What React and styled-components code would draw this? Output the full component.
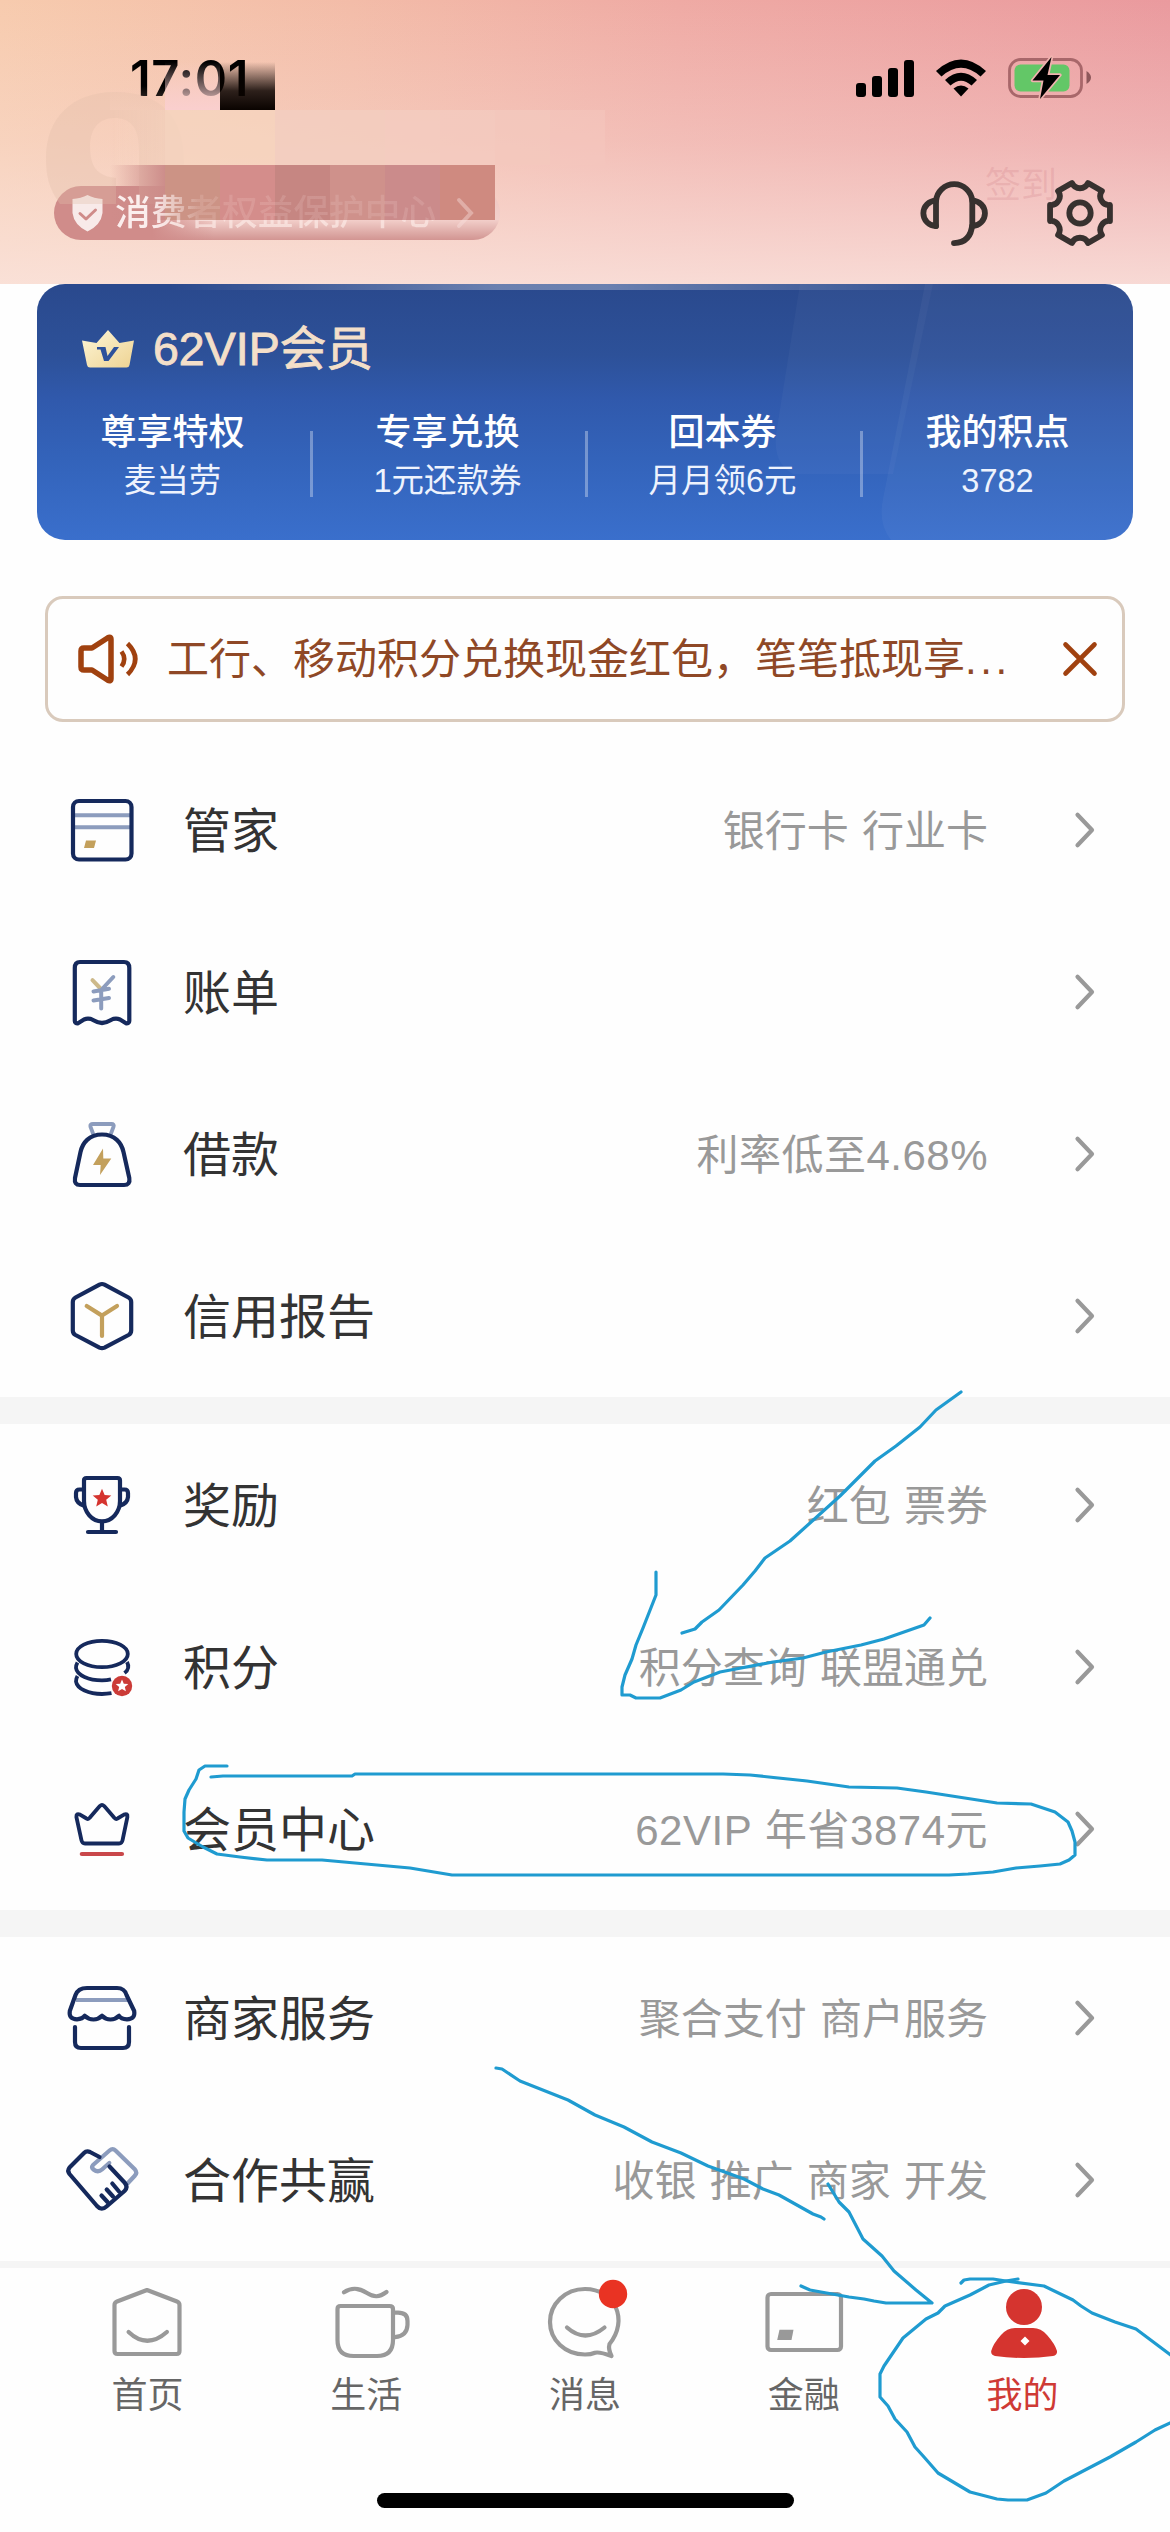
import React from 'react';
import styled, { createGlobalStyle } from 'styled-components';

const GlobalStyle = createGlobalStyle`
	* {
		box-sizing: border-box;
	}
	body {
		margin: 0;
		background: #fefefe;
		font-family: 'Liberation Sans', 'Noto Sans CJK SC', sans-serif;
	}
	svg {
		display: block;
		flex: none;
		overflow: visible;
	}
`;

const Page = styled.div`
	position: relative;
	width: 1170px;
	height: 2532px;
	overflow: hidden;
	background: #fefefe;
`;

/* ---------- header ---------- */

const Header = styled.header`
	position: relative;
	height: 284px;
	background:
		linear-gradient(180deg, rgba(250, 230, 222, 0) 0%, rgba(249, 226, 220, 0.35) 50%, rgba(250, 228, 222, 0.85) 100%),
		linear-gradient(90deg, #f7cbae 0%, #f3bca8 30%, #efaaa4 58%, #ea9a9e 100%);
`;

const StatusBar = styled.div`
	display: flex;
	align-items: center;
	justify-content: space-between;
	height: 156px;
	padding: 0 79px 0 130px;
`;

const Clock = styled.span`
	font-family: Inter, sans-serif;
	font-size: 49px;
	font-weight: 600;
	letter-spacing: 0.6px;
	color: #000;
`;

const StatusIcons = styled.div`
	display: flex;
	align-items: center;
`;

const WifiBox = styled.div`
	margin: 0 22px 0 32px;
`;

const Toolbar = styled.div`
	display: flex;
	align-items: center;
	justify-content: space-between;
	height: 54px;
	margin-top: 30px;
	padding: 0 55px 0 54px;
`;

const Pill = styled.div`
	display: flex;
	align-items: center;
	width: 446px;
	height: 54px;
	padding-left: 18px;
	border-radius: 27px;
	background:
		linear-gradient(90deg, #d08c8a 0%, #d08c8a 22%, rgba(208, 140, 138, 0) 36%),
		linear-gradient(180deg, #eec5c0 0%, #f3d0cb 62%, #d29592 100%);
`;

/* the wording is washed out past the second character */
const PillText = styled.span`
	position: relative;
	z-index: 2;
	margin-left: 12px;
	font-size: 35.7px;
	line-height: 54px;
	font-weight: 500;
	white-space: nowrap;
	color: transparent;
	background:
		linear-gradient(90deg, #fbeeed 0%, #fbeeed 11%, rgba(251, 238, 237, 0) 26%),
		linear-gradient(180deg, rgba(250, 225, 222, 0.16) 63%, rgba(252, 234, 230, 0.7) 64%);
	background-clip: text;
`;

const PillArrow = styled.svg`
	position: relative;
	z-index: 2;
	margin-left: 20px;
`;

const Tools = styled.div`
	position: relative;
	display: flex;
	gap: 56px;
`;

const SignIn = styled.span`
	position: absolute;
	left: 66px;
	top: -17px;
	font-size: 36px;
	line-height: 50px;
	color: rgba(205, 120, 130, 0.22);
`;

const GhostLetter = styled.svg`
	position: absolute;
	left: 46px;
	top: 92px;
`;

const Mosaic = styled.div`
	position: absolute;
	left: ${(p) => p.$x}px;
	top: ${(p) => p.$y}px;
	z-index: 1;
	display: flex;
	opacity: ${(p) => p.$fade || 1};
`;

const Tile = styled.span`
	width: 55px;
	height: ${(p) => p.$height || 55}px;
	background: ${(p) => p.$fill};
`;

/* ---------- member card ---------- */

const Card = styled.section`
	position: relative;
	width: 1096px;
	height: 256px;
	margin: 0 auto;
	border-radius: 28px;
	overflow: hidden;
	background:
		linear-gradient(90deg, rgba(255, 255, 255, 0) 12%, rgba(255, 255, 255, 0.3) 42%, rgba(255, 255, 255, 0.3) 52%, rgba(255, 255, 255, 0) 85%) top / 100% 6px no-repeat,
		linear-gradient(180deg, #2a498d 0%, #2d5199 28%, #3059ac 45%, #3363ba 68%, #3a6fcc 100%);
`;

const Shine = styled.svg`
	position: absolute;
	right: 0;
	top: 0;
`;

const CardTitle = styled.h2`
	position: relative;
	display: flex;
	align-items: center;
	gap: 18px;
	height: 84px;
	margin: 23px 0 0;
	padding-left: 44px;
	font-size: 46.5px;
	line-height: 84px;
	font-weight: 400;
	color: #f3dfc9;
	-webkit-text-stroke: 0.9px #f3dfc9;
`;

const Perks = styled.div`
	position: relative;
	display: grid;
	grid-template-columns: repeat(4, 1fr);
	margin: 17px -2px 0;
`;

const Perk = styled.div`
	display: flex;
	flex-direction: column;
	align-items: center;

	& + & {
		background: linear-gradient(rgba(255, 255, 255, 0.33), rgba(255, 255, 255, 0.33)) 0 23px / 3px 66px no-repeat;
	}
`;

const PerkName = styled.div`
	font-size: 36px;
	line-height: 50px;
	font-weight: 500;
	color: #fff;
`;

const PerkNote = styled.div`
	font-size: 32.5px;
	line-height: 46px;
	color: #eef3fd;
`;

/* ---------- notice ---------- */

const Notice = styled.div`
	display: flex;
	align-items: center;
	width: 1080px;
	height: 126px;
	margin: 56px auto 27px;
	padding: 0 25px 0 30px;
	border: 3px solid #d9cabc;
	border-radius: 18px;
`;

const NoticeText = styled.p`
	flex: 1;
	margin: 0 0 0 28px;
	padding-top: 2px;
	font-size: 42px;
	line-height: 60px;
	color: #8f4826;
	white-space: nowrap;
`;

const Dots = styled.span`
	letter-spacing: 3.6px;
`;

/* ---------- list ---------- */

const Group = styled.ul`
	margin: 0;
	padding: 0;
	list-style: none;

	& + & {
		border-top: 27px solid #f5f5f5;
	}
`;

const Row = styled.li`
	display: flex;
	align-items: center;
	height: 162px;
	padding: 0 75px 0 62px;
`;

const Label = styled.span`
	margin-left: 41px;
	padding-top: 3px;
	font-size: 48px;
	line-height: 70px;
	color: #333;
`;

const Value = styled.span`
	margin: 0 87px 0 auto;
	padding-top: 3px;
	font-size: 42px;
	line-height: 60px;
	word-spacing: 1.5px;
	letter-spacing: ${(p) => (p.$loose ? '0.5px' : '0')};
	color: #999;
`;

/* ---------- tab bar ---------- */

const TabBar = styled.nav`
	display: flex;
	height: 271px;
	padding: 14px 38px 0;
	border-top: 7px solid #f5f5f5;
`;

const Tab = styled.div`
	display: flex;
	flex: 1;
	flex-direction: column;
	align-items: center;
	gap: 7px;
	font-size: 36px;
	line-height: 54px;
	color: ${(p) => (p.$active ? '#cf3a35' : '#666')};
`;

const HomeBar = styled.div`
	position: absolute;
	left: 377px;
	bottom: 24px;
	width: 417px;
	height: 15px;
	border-radius: 8px;
	background: #000;
`;

const Scribble = styled.svg`
	position: absolute;
	left: 0;
	top: 0;
	z-index: 3;
	pointer-events: none;
`;

/* ---------- icons ---------- */

const NAVY = '#15295c';
const MIST = '#8c9cbd';
const GOLD = '#c3a05c';
const RED = '#d5342f';

const STAR = 'M0 -10 L2.7 -3.5 L9.5 -3.1 L4.3 1.4 L5.9 8.1 L0 4.5 L-5.9 8.1 L-4.3 1.4 L-9.5 -3.1 L-2.7 -3.5 Z';

const RowIcon = ({ children }) => (
	<svg width="80" height="80" viewBox="0 0 80 80" fill="none" stroke={NAVY} strokeWidth="4.2" strokeLinecap="round" strokeLinejoin="round">
		{children}
	</svg>
);

const WalletIcon = () => (
	<RowIcon>
		<path d="M12 25.2H68M12 37.2H68" stroke={MIST} strokeWidth="4" />
		<rect x="11" y="11" width="58.5" height="58.5" rx="6" />
		<path d="M24 50.5H34L32 58H22Z" fill={GOLD} stroke="none" />
	</RowIcon>
);

const BillIcon = () => (
	<RowIcon>
		<path d="M18 10H62Q67.3 10 67.3 16V69Q67.3 71.5 64 71.3L58 67.5Q53 65.5 48 68.5Q40 73.5 32 68.5Q27 65.5 22 67.5L16 71.3Q12.8 71.5 12.8 69V16Q12.8 10 18 10Z" />
		<path d="M30.5 28.2L38 36" stroke="#cdb98a" strokeWidth="4" />
		<path d="M51.3 25L39.2 38V56.5M31.5 39.5L47 36.8M31.5 48.5L47 46" stroke={MIST} strokeWidth="4" />
	</RowIcon>
);

const LoanIcon = () => (
	<RowIcon>
		<path d="M31 19.5L28.4 12.5Q27.8 10 31 10H49.5Q52.5 10 51.6 12.5L49 19.5" stroke={MIST} strokeWidth="3.8" />
		<path d="M40 20.5C27 20.5 20.5 29 18.5 38L13 64Q12 71 18 71H62Q68.5 71 67.3 64L61.5 38C59.5 29 53 20.5 40 20.5Z" />
		<path d="M41 34.5L31 51H38.7L38 61L49.3 44.6H41.3Z" fill={GOLD} stroke="none" />
	</RowIcon>
);

const ReportIcon = () => (
	<RowIcon>
		<path d="M37.5 8.6Q40 7.4 42.5 8.6L66.5 21.5Q69.2 23 69.2 26V54.5Q69.2 57.5 66.5 59L42.5 71.6Q40 72.8 37.5 71.6L13.5 59Q10.8 57.5 10.8 54.5V26Q10.8 23 13.5 21.5Z" />
		<path d="M24.7 30L40 39.6L55 30M40 39.6V60" stroke={GOLD} />
	</RowIcon>
);

const TrophyIcon = () => (
	<RowIcon>
		<path d="M24.5 13H55.5Q58 13 58 15.5V36C58 47 50 56.4 40 56.4S22 47 22 36V15.5Q22 13 24.5 13Z" />
		<path d="M21 24.5H17.5Q14 24.5 14 28V32Q14.5 38 21.5 40.5M59 24.5H62.5Q66 24.5 66 28V32Q65.5 38 58.5 40.5" />
		<path d="M40 57V66M26 67H54" />
		<path d={STAR} transform="translate(40 33.5) scale(.98)" fill={RED} stroke="none" />
	</RowIcon>
);

const PointsIcon = () => (
	<RowIcon>
		<ellipse cx="40" cy="27" rx="25.8" ry="13.2" strokeWidth="3.8" />
		<path d="M15.5 35.5Q14 38 14 41C15 48.5 27 53.3 40 53.3Q45 53.3 49 52.3M65 35Q68.5 41.5 62.5 46" strokeWidth="3.8" strokeLinecap="butt" />
		<path d="M15.5 49Q14 51.5 14 54.5C15 62 27 67 40 67Q45 67 49.5 66.2" strokeWidth="3.8" strokeLinecap="butt" />
		<circle cx="60" cy="59" r="10.2" fill="#cb3b37" stroke="none" />
		<path d={STAR} transform="translate(60 59) scale(.66)" fill="#fff" stroke="none" />
	</RowIcon>
);

const CrownIcon = () => (
	<RowIcon>
		<path d="M37.8 17Q40 14.8 42.2 17L52.5 29Q54.3 30.8 56.3 29L62 25.6Q66 24 65.4 28L60.6 51Q60 54.5 57 54.5H23Q20 54.5 19.4 51L14.4 28Q14 24 18 25.6L23.7 29Q25.7 30.8 27.5 29Z" strokeWidth="3.8" />
		<path d="M19.8 65H60" stroke="#c9474a" />
	</RowIcon>
);

const ShopIcon = () => (
	<RowIcon>
		<path d="M14 22H66" stroke={MIST} strokeWidth="4" strokeLinecap="butt" />
		<path d="M25 10H55Q62.5 10 64.5 17L72.2 33Q73.5 41 65 41.3Q59 41 57 37.8Q53.5 41.5 48.5 41.5T40 37.8Q36.5 41.5 31.5 41.5T22.7 37.8Q20.5 41 15 41.3Q6.5 41 7.8 33L13.5 17Q16 10 25 10Z" />
		<path d="M13 49V64Q13 70 19 70H61Q67 70 67 64V49" />
	</RowIcon>
);

const HandshakeIcon = () => (
	<RowIcon>
		<path d="M66 43L73 35.5Q75.5 32.5 73 29.5L53.5 10.5Q50.7 7.8 47.5 10.5L31 25Q29 27.5 31.5 29.5Q36 33 40 29.5L47.3 23" stroke={MIST} />
		<path d="M37.5 17L28 12Q24.5 10.5 22 13L7.5 27.5Q5 30.5 7.5 34L35 66Q39.5 71 44.5 66.5L62.5 51Q66.5 47 62.5 42.5L47.5 26.5" />
		<path d="M39.5 55.5L45.5 62M44.7 49.5L51 56.5M50.3 43.5L57 51.5" />
	</RowIcon>
);

const Chevron = () => (
	<svg width="20" height="36" viewBox="0 0 20 36" fill="none" stroke="#999" strokeWidth="4.2" strokeLinecap="round" strokeLinejoin="round">
		<path d="M2.5 2.8L17 18L2.5 33.2" />
	</svg>
);

const TabIcon = ({ children }) => (
	<svg width="80" height="80" viewBox="0 0 80 80" fill="none" stroke="#999" strokeWidth="4.2" strokeLinecap="round" strokeLinejoin="round">
		{children}
	</svg>
);

const HomeIcon = () => (
	<TabIcon>
		<path d="M40 8L70 19.5Q72.5 20.5 72.5 23V69Q72.5 72 69.5 72H10.5Q7.5 72 7.5 69V23Q7.5 20.5 10 19.5Z" />
		<path d="M21.6 50Q40 67.5 59.9 50" />
	</TabIcon>
);

const LifeIcon = () => (
	<TabIcon>
		<path d="M14.5 24H63.5Q67 24 67 27V58Q67 74 51 74H27.5Q11.5 74 11.5 58V27Q11.5 24 14.5 24Z" />
		<path d="M68.5 30.7H72Q81.5 30.7 81.5 39V43Q81 54 69 55.2" />
		<path d="M18 10.3C27 4.5 34 6.5 41 11S53 15.5 60.5 10" />
	</TabIcon>
);

const MessageIcon = () => (
	<TabIcon>
		<path d="M64.5 62C84 38 70 7 40 7C20 7 5 22 5 40S20 72.500 40 72.500Q46 72.500 50 70.800Q54 69.500 66.500 74Q63 67 64.500 62Z" />
		<path d="M22 45.5Q40 61.5 59.5 45.5" />
		<circle cx="68" cy="12" r="14.2" fill="#e93323" stroke="none" />
	</TabIcon>
);

const FinanceIcon = () => (
	<TabIcon>
		<rect x="3.5" y="12" width="73.5" height="56" rx="3.5" />
		<path d="M15.5 47.7H29.5L27.5 58H13.2Z" fill="#999" stroke="none" />
	</TabIcon>
);

const MineIcon = () => (
	<TabIcon>
		<g fill={RED} stroke="none">
			<circle cx="41" cy="25" r="18" />
			<path d="M32 46H50Q58 46 64 53Q72 62 74 69Q74.5 73 70 74Q56 76 41 76T12 74Q7.7 73 8.2 69Q10 62 18 53Q24 46 32 46Z" />
		</g>
		<path d="M42 54.5L46.5 59L42 63.5L37.5 59Z" fill="#fff" stroke="none" />
	</TabIcon>
);

const HeadsetIcon = () => (
	<svg width="70" height="70" viewBox="0 0 70 70" fill="none" stroke="#37312f" strokeWidth="5.8" strokeLinecap="round" strokeLinejoin="round">
		<path d="M17 48V23A18.2 18.2 0 0 1 53.3 23V46Q52 64.5 35 65.2" />
		<path d="M17 22.7A12.6 12.6 0 0 0 17 48M53.3 22.7A12.6 12.6 0 0 1 53.3 48" />
	</svg>
);

// six teeth joined by concave arcs
const gearPath = () => {
	const point = (deg) => {
		const a = (deg * Math.PI) / 180;
		return `${(35 + 31 * Math.cos(a)).toFixed(2)} ${(35 + 31 * Math.sin(a)).toFixed(2)}`;
	};
	let d = `M${point(-15)}`;
	for (let t = 0; t < 360; t += 60) {
		d += `L${point(t + 15)}A8.8 8.8 0 0 0 ${point(t + 45)}`;
	}
	return `${d}Z`;
};

const GearIcon = () => (
	<svg width="70" height="70" viewBox="0 0 70 70" fill="none" stroke="#37312f" strokeWidth="5.8" strokeLinejoin="round">
		<path d={gearPath()} />
		<circle cx="35" cy="35" r="10.7" />
	</svg>
);

const ShieldIcon = () => (
	<svg width="31" height="38" viewBox="0 0 31 38">
		<path d="M15.5 1Q22 4.5 30.5 5V19Q29 31 15.5 37.5Q2 31 .5 19V5Q9 4.5 15.5 1Z" fill="#f8eae9" />
		<path d="M8 19.5L14 25L23.5 16" fill="none" stroke="#cf8b89" strokeWidth="3" strokeLinecap="round" strokeLinejoin="round" />
	</svg>
);

const SignalIcon = () => (
	<svg width="48" height="38" viewBox="0 0 48 38">
		<rect x="0" y="24" width="10" height="14" rx="3" />
		<rect x="16" y="17" width="10" height="21" rx="3" />
		<rect x="32" y="9" width="10" height="29" rx="3" />
		<rect x="48" y="1" width="10" height="37" rx="3" />
	</svg>
);

const WifiIcon = () => (
	<svg width="50" height="38" viewBox="0 0 50 38">
		<path d="M0 12Q25 -11 50 12L44.5 17.5Q25 0 5.5 17.5Z" />
		<path d="M9 21Q25 6.5 41 21L35.5 26.5Q25 17 14.5 26.5Z" />
		<path d="M17.5 29.5Q25 23.5 32.5 29.5L25 37.5Z" />
	</svg>
);

const BatteryIcon = () => (
	<svg width="83" height="42" viewBox="0 0 83 42">
		<rect x="1.5" y="2.5" width="72" height="37" rx="11" fill="none" stroke="#a8676a" strokeWidth="2.8" />
		<path d="M78.5 14Q83 17 83 20.5T78.5 27Z" fill="#8e585b" />
		<rect x="6.5" y="7.5" width="55" height="27" rx="6" fill="#63c767" />
		<path d="M43.5 0L24.5 23.5H35.5L32 42L52 18H39.5Z" fill="#000" stroke="#f0b2ae" strokeWidth="3.5" paintOrder="stroke" strokeLinejoin="round" />
	</svg>
);

const VipIcon = () => (
	<svg width="54" height="40" viewBox="0 0 54 40">
		<defs>
			<linearGradient id="vip" x1="0" y1="0" x2="1" y2="1">
				<stop offset="0" stopColor="#fdf6d8" />
				<stop offset="1" stopColor="#eed392" />
			</linearGradient>
		</defs>
		<path d="M27 1L38.5 14L53 11.5L48.5 36Q48 38.5 45.5 38.5H9Q6.5 38.5 6 36L1 11.5L15.5 14Z" fill="url(#vip)" />
		<path d="M16 18H24.5L26.5 27L33 18H38L27.5 32H23L19.5 20.5H16Z" fill="#2d519b" />
	</svg>
);

const SpeakerIcon = () => (
	<svg width="61" height="50" viewBox="0 0 61 50" fill="none" stroke="#a0410f" strokeWidth="5.5" strokeLinejoin="round">
		<path d="M6 14H14L29.5 4Q33 2 33 5.5V44.5Q33 48 29.5 46L14 36H6Q3 36 3 33V17Q3 14 6 14Z" />
		<path d="M43.5 17.5Q49 25 43.5 32.5M49.5 9.5Q65 25 49.5 40.5" strokeWidth="4.6" />
	</svg>
);

const CloseIcon = () => (
	<svg width="34" height="34" viewBox="0 0 34 34" stroke="#a0410f" strokeWidth="4.6" strokeLinecap="round">
		<path d="M2.5 2.5L31.5 31.5M31.5 2.5L2.5 31.5" />
	</svg>
);

/* ---------- data ---------- */

const perks = [
	['尊享特权', '麦当劳'],
	['专享兑换', '1元还款券'],
	['回本券', '月月领6元'],
	['我的积点', '3782'],
];

const groups = [
	[
		{ icon: WalletIcon, label: '管家', value: '银行卡 行业卡' },
		{ icon: BillIcon, label: '账单' },
		{ icon: LoanIcon, label: '借款', value: '利率低至4.68%', loose: true },
		{ icon: ReportIcon, label: '信用报告' },
	],
	[
		{ icon: TrophyIcon, label: '奖励', value: '红包 票券' },
		{ icon: PointsIcon, label: '积分', value: '积分查询 联盟通兑' },
		{ icon: CrownIcon, label: '会员中心', value: '62VIP 年省3874元', loose: true },
	],
	[
		{ icon: ShopIcon, label: '商家服务', value: '聚合支付 商户服务' },
		{ icon: HandshakeIcon, label: '合作共赢', value: '收银 推广 商家 开发' },
	],
];

const tabs = [
	{ icon: HomeIcon, label: '首页' },
	{ icon: LifeIcon, label: '生活' },
	{ icon: MessageIcon, label: '消息' },
	{ icon: FinanceIcon, label: '金融' },
	{ icon: MineIcon, label: '我的', active: true },
];

const nameTiles = ['#f6d5c0', '#f7d5bf', '#f3cfc1', '#f3cec0', '#f4cdc1', '#f4cbc0', '#f4c9be', 'rgba(244, 198, 190, .7)'];
const pinkTiles = ['#cc9385', '#d48d8b', '#c68682', '#cf918b', '#cb8b8b', '#cf8a80'];

// freehand pen strokes drawn over the page
const strokes = [
	'961,1392 936,1410 920,1427 896,1446 875,1461 840,1496 790,1541 765,1558 755,1571 743,1585 719,1610 702,1622 695,1629 682,1633',
	'656,1572 656,1595 643,1628 636,1645 632,1659 625,1675 622,1687 622,1695 630,1695 636,1698 660,1698 681,1690 694,1682 720,1672 773,1662 803,1658 826,1652 861,1645 884,1639 924,1625 930,1618',
	'227,1766 205,1766 199,1770 196,1779 189,1790 185,1799 184,1812 184,1831 188,1838 203,1847 217,1854 240,1857 267,1860 322,1860 355,1863 410,1868 452,1875 949,1875 968,1874 993,1872 1016,1868 1040,1866 1060,1864 1069,1860 1075,1855 1075,1842 1072,1831 1068,1822 1055,1812 1031,1804 997,1803 926,1792 897,1788 849,1787 807,1781 788,1779 750,1775 723,1774 355,1774 352,1776 223,1776 211,1777',
	'496,2068 502,2069 520,2081 568,2100 595,2115 624,2127 652,2142 681,2153 708,2166 744,2179 763,2189 779,2195 813,2214 821,2217 824,2219',
	'828,2184 839,2202 849,2212 863,2239 882,2256 894,2271 916,2290 932,2303 886,2303 874,2301 864,2299 849,2297 821,2292 810,2290 801,2286',
	'961,2283 964,2280 970,2279 993,2279 1006,2281 1044,2286 1073,2300 1081,2306 1092,2313 1115,2322 1136,2329 1172,2356',
	'1018,2279 1006,2281 989,2285 970,2295 945,2306 938,2313 926,2319 903,2338 884,2366 880,2374 880,2397 888,2406 895,2419 907,2432 915,2447 924,2457 938,2473 970,2492 997,2499 1008,2500 1027,2500 1046,2493 1064,2481 1110,2457 1136,2442 1155,2430 1172,2422',
];

const App = () => {
	return (
		<Page>
			<GlobalStyle />
			<Header>
				<GhostLetter width="140" height="112" fill="none">
					<path d="M14 112C2 96 0 82 0 66C0 26 26 0 69 0C115 0 138 25 138 70V112H93V58C93 36 85 26 68 26C52 26 44 38 44 54C44 76 52 84 70 86V112Z" fill="rgba(226, 190, 170, 0.34)" />
				</GhostLetter>
				<StatusBar>
					<Clock>17:01</Clock>
					<StatusIcons>
						<SignalIcon />
						<WifiBox><WifiIcon /></WifiBox>
						<BatteryIcon />
					</StatusIcons>
				</StatusBar>
				<Toolbar>
					<Pill>
						<ShieldIcon />
						<PillText>消费者权益保护中心</PillText>
						<PillArrow width="18" height="32" fill="none" stroke="rgba(250, 228, 224, .4)" strokeWidth="4" strokeLinecap="round">
							<path d="M3 3L15 16L3 29" />
						</PillArrow>
					</Pill>
					<Tools>
						<SignIn>签到</SignIn>
						<HeadsetIcon />
						<GearIcon />
					</Tools>
				</Toolbar>
				<Mosaic $x={110} $y={62}>
					<Tile $height={48} $fill="linear-gradient(180deg, rgba(248, 205, 185, 0) 50%, rgba(248, 208, 190, .35))" />
					<Tile $height={48} $fill="linear-gradient(180deg, rgba(250, 207, 206, 0), #facfce)" />
					<Tile $height={48} $fill="linear-gradient(180deg, rgba(10, 3, 0, 0), rgba(10, 3, 0, .85) 60%, #0a0300)" />
				</Mosaic>
				<Mosaic $x={110} $y={110} $fade={0.8}>
					<Tile $fill="linear-gradient(90deg, rgba(246, 213, 192, 0), rgba(246, 213, 192, .6))" />
					{nameTiles.map((fill, i) => (
						<Tile key={i} $fill={fill} />
					))}
				</Mosaic>
				<Mosaic $x={110} $y={165}>
					<Tile $fill="linear-gradient(90deg, rgba(205, 140, 140, 0), rgba(203, 138, 136, .95))" />
					{pinkTiles.map((fill, i) => (
						<Tile key={i} $fill={fill} />
					))}
				</Mosaic>
			</Header>

			<Card>
				<Shine width="420" height="256">
					<path d="M87 0H220L180 190H80Q60 180 63 150Z" fill="rgba(255, 255, 255, 0.03)" />
					<path d="M212 0H420V256H178Q165 240 170 215Z" fill="rgba(255, 255, 255, 0.04)" />
				</Shine>
				<CardTitle>
					<VipIcon />
					62VIP会员
				</CardTitle>
				<Perks>
					{perks.map(([name, note]) => (
						<Perk key={name}>
							<PerkName>{name}</PerkName>
							<PerkNote>{note}</PerkNote>
						</Perk>
					))}
				</Perks>
			</Card>

			<Notice>
				<SpeakerIcon />
				<NoticeText>
					工行、移动积分兑换现金红包，笔笔抵现享<Dots>...</Dots>
				</NoticeText>
				<CloseIcon />
			</Notice>

			{groups.map((rows, i) => (
				<Group key={i}>
					{rows.map(({ icon: Icon, label, value, loose }) => (
						<Row key={label}>
							<Icon />
							<Label>{label}</Label>
							<Value $loose={loose}>{value}</Value>
							<Chevron />
						</Row>
					))}
				</Group>
			))}

			<TabBar>
				{tabs.map(({ icon: Icon, label, active }) => (
					<Tab key={label} $active={active}>
						<Icon />
						{label}
					</Tab>
				))}
			</TabBar>
			<HomeBar />

			<Scribble width="1170" height="2532" fill="none" stroke="#1f9bd0" strokeWidth="3.2" strokeLinecap="round" strokeLinejoin="round">
				{strokes.map((points) => (
					<polyline key={points} points={points} />
				))}
			</Scribble>
		</Page>
	);
};

export default App;
